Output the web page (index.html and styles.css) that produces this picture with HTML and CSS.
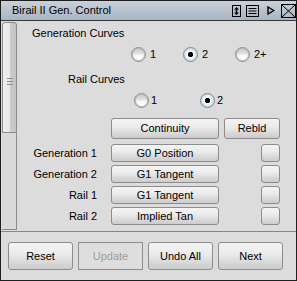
FILE: index.html
```html
<!DOCTYPE html>
<html>
<head>
<meta charset="utf-8">
<link rel="stylesheet" href="styles.css">
</head>
<body>
<div class="window">
  <div class="titlebar">
    <span class="title">Birail II Gen. Control</span>
    <div class="tools">
      <svg class="ic ic-ud" width="9" height="12" viewBox="0 0 9 12">
        <rect x="0.5" y="0.5" width="8" height="11" fill="none" stroke="#000"/>
        <path d="M4.5 3 V9" stroke="#000" stroke-width="1.6"/>
        <path d="M2 4.5 L4.5 2 L7 4.5 Z M2 7.5 L4.5 10 L7 7.5 Z" fill="#000"/>
      </svg>
      <svg class="ic ic-list" width="13" height="12" viewBox="0 0 13 12">
        <rect x="0.5" y="0.5" width="12" height="11" fill="none" stroke="#000"/>
        <path d="M2.5 3.5 H10.5 M2.5 6 H10.5 M2.5 8.5 H10.5" stroke="#000"/>
      </svg>
      <svg class="ic ic-play" width="8" height="9" viewBox="0 0 8 9">
        <path d="M1 1 L6.8 4.5 L1 8 Z" fill="none" stroke="#000" stroke-width="1.4" stroke-linejoin="miter"/>
      </svg>
      <svg class="ic ic-close" width="15" height="14" viewBox="0 0 15 14">
        <rect x="0.5" y="0.5" width="14" height="13" fill="none" stroke="#000"/>
        <path d="M1 1 L14 13 M14 1 L1 13" stroke="#000"/>
      </svg>
    </div>
  </div>
  <div class="main">
    <div class="scroll">
      <div class="thumb"><span class="grip"></span></div>
      <div class="track"></div>
    </div>
    <div class="content">
      <div class="heading heading-gen">Generation Curves</div>
      <div class="radios radios-gen">
        <label class="radio"><span class="dot"></span>1</label>
        <label class="radio"><span class="dot on"></span>2</label>
        <label class="radio"><span class="dot"></span>2+</label>
      </div>
      <div class="heading heading-rail">Rail Curves</div>
      <div class="radios radios-rail">
        <label class="radio"><span class="dot"></span>1</label>
        <label class="radio"><span class="dot on"></span>2</label>
      </div>
      <div class="btnrow">
        <button class="btn btn-wide">Continuity</button>
        <button class="btn btn-rebld">Rebld</button>
      </div>
      <div class="row">
        <span class="lbl">Generation 1</span>
        <button class="btn btn-wide">G0 Position</button>
        <button class="btn btn-sq"></button>
      </div>
      <div class="row">
        <span class="lbl">Generation 2</span>
        <button class="btn btn-wide">G1 Tangent</button>
        <button class="btn btn-sq"></button>
      </div>
      <div class="row">
        <span class="lbl">Rail 1</span>
        <button class="btn btn-wide">G1 Tangent</button>
        <button class="btn btn-sq"></button>
      </div>
      <div class="row">
        <span class="lbl">Rail 2</span>
        <button class="btn btn-wide">Implied Tan</button>
        <button class="btn btn-sq"></button>
      </div>
    </div>
  </div>
  <div class="sep"></div>
  <div class="footer">
    <button class="btn btn-foot">Reset</button>
    <button class="btn btn-foot disabled">Update</button>
    <button class="btn btn-foot">Undo All</button>
    <button class="btn btn-foot">Next</button>
  </div>
</div>
</body>
</html>
```
FILE: styles.css
```css
* { box-sizing: border-box; }
html, body { margin: 0; padding: 0; }
body {
  font-family: "Liberation Sans", Arial, sans-serif;
  font-size: 11px;
  line-height: 13px;
  color: #000;
  background: #fff;
}
.window {
  width: 297px;
  height: 281px;
  border: 1px solid #1e1e1e;
  background: #dcdcdc;
  display: flex;
  flex-direction: column;
}
.titlebar {
  height: 20px;
  flex: none;
  border-bottom: 1px solid #3a3a3a;
  background: linear-gradient(#c8d1db, #a8b4c1);
  display: flex;
  align-items: center;
  padding-left: 11px;
}
.title { font-size: 11px; line-height: 13px; color: #000; }
.tools { margin-left: auto; display: flex; align-items: center; }
.tools svg { display: block; }
.ic-ud { margin-right: 5px; }
.ic-list { margin-right: 8px; }
.ic-play { margin-right: 6px; }

.main { height: 210px; flex: none; display: flex; }
.scroll {
  width: 16px;
  flex: none;
  display: flex;
  flex-direction: column;
  padding-left: 1px;
}
.thumb {
  margin-top: 1px;
  height: 111px;
  flex: none;
  border: 1px solid #8a8a8a;
  border-radius: 3px 3px 0 0;
  background: linear-gradient(to right, #efefef 0, #e8e8e8 50%, #cacaca 58%, #c4c4c4 100%);
  display: flex;
  align-items: center;
  justify-content: center;
}
.grip {
  display: block;
  width: 6px;
  height: 7px;
  margin-top: 8px;
  border-top: 1px solid #8c8c8c;
  border-bottom: 1px solid #8c8c8c;
  background: linear-gradient(#8c8c8c, #8c8c8c) center / 100% 1px no-repeat;
}
.track {
  height: 97px;
  flex: none;
  border-right: 1px solid #8a8a8a;
  border-bottom: 1px solid #8a8a8a;
  background: #d9d9d9;
}

.content { flex: 1; }
.heading { height: 13px; }
.heading-gen { margin-top: 6px; padding-left: 15px; }
.heading-rail { margin-top: 11px; padding-left: 51px; }

.radios { display: flex; height: 15px; }
.radios-gen { margin-top: 7px; padding-left: 114px; }
.radios-rail { margin-top: 7px; padding-left: 117px; }
.radio { display: flex; align-items: center; width: 52px; height: 15px; }
.radios-rail .radio { width: 66px; }
.dot {
  width: 15px;
  height: 15px;
  flex: none;
  margin-right: 4px;
  border-radius: 50%;
  border: 1px solid #8e8e8e;
  box-shadow: inset 0 0 0 1px #bcbcbc;
  background: linear-gradient(#c9c9c9 0%, #dedede 40%, #f7f7f7 58%, #ffffff 100%);
}
.radios-rail .dot { margin-right: 2px; }
.dot.on {
  border-color: #7f8a90;
  box-shadow: none;
  background: radial-gradient(circle, #000 0, #000 2.3px, #fff 3px, #f6fafb 3.6px, #d4e5ea 5.5px, #bfd3da 7px);
}

.btn {
  font-family: "Liberation Sans", Arial, sans-serif;
  font-size: 11px;
  line-height: 13px;
  color: #000;
  padding: 0;
  margin: 0;
  border: 1px solid #8c8c8c;
  border-radius: 3px;
  background: linear-gradient(#f4f4f4 0%, #ececec 40%, #d8d8d8 75%, #cdcdcd 100%);
  flex: none;
}
.btnrow {
  display: flex;
  height: 21px;
  margin-top: 10px;
  padding-left: 94px;
  gap: 5px;
}
.btn-wide { width: 108px; }
.btn-rebld { width: 56px; }
.row {
  display: flex;
  align-items: center;
  height: 18px;
  margin-top: 3px;
}
.btnrow + .row { margin-top: 5px; }
.row .btn { height: 18px; }
.lbl { width: 80px; text-align: right; margin-right: 14px; flex: none; }
.btn-sq { width: 19px; margin-left: 42px; }

.sep { height: 1px; flex: none; background: #878787; }
.footer {
  flex: 1;
  display: flex;
  gap: 5px;
  padding: 10px 0 0 7px;
}
.btn-foot { width: 65px; height: 28px; }
.btn-foot.disabled {
  color: #9c9c9c;
  border-radius: 0;
  border-color: #8e8e8e;
  background: #dedede;
}
```
